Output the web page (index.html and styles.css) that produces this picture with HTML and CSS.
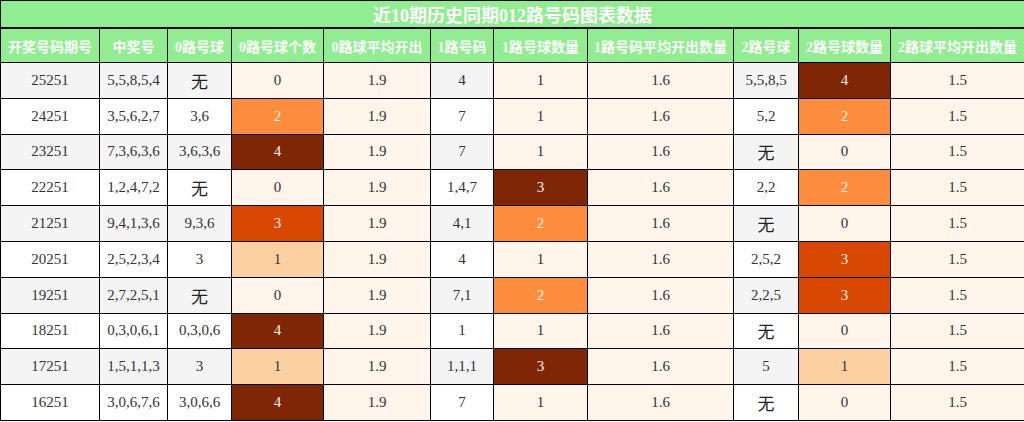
FILE: index.html
```html
<!DOCTYPE html>
<html lang="zh">
<head>
<meta charset="utf-8">
<title>近10期历史同期012路号码图表数据</title>
<link rel="stylesheet" href="styles.css">
</head>
<body>
<table class="chart">
<colgroup>
<col class="c1"><col class="c2"><col class="c3"><col class="c4"><col class="c5"><col class="c6"><col class="c7"><col class="c8"><col class="c9"><col class="c10"><col class="c11">
</colgroup>
<thead>
<tr class="title-row"><th colspan="11">近10期历史同期012路号码图表数据</th></tr>
<tr class="head-row">
<th>开奖号码期号</th><th>中奖号</th><th>0路号球</th><th>0路号球个数</th><th>0路球平均开出</th><th>1路号码</th><th>1路号球数量</th><th>1路号码平均开出数量</th><th>2路号球</th><th>2路号球数量</th><th>2路球平均开出数量</th>
</tr>
</thead>
<tbody>
<tr class="odd"><td class="g">25251</td><td class="g">5,5,8,5,4</td><td class="g none">无</td><td class="h0">0</td><td class="h0">1.9</td><td class="g">4</td><td class="h0">1</td><td class="h0">1.6</td><td class="g">5,5,8,5</td><td class="h4">4</td><td class="h0">1.5</td></tr>
<tr><td class="g">24251</td><td class="g">3,5,6,2,7</td><td class="g">3,6</td><td class="h2">2</td><td class="h0">1.9</td><td class="g">7</td><td class="h0">1</td><td class="h0">1.6</td><td class="g">5,2</td><td class="h2">2</td><td class="h0">1.5</td></tr>
<tr class="odd"><td class="g">23251</td><td class="g">7,3,6,3,6</td><td class="g">3,6,3,6</td><td class="h4">4</td><td class="h0">1.9</td><td class="g">7</td><td class="h0">1</td><td class="h0">1.6</td><td class="g none">无</td><td class="h0">0</td><td class="h0">1.5</td></tr>
<tr><td class="g">22251</td><td class="g">1,2,4,7,2</td><td class="g none">无</td><td class="h0">0</td><td class="h0">1.9</td><td class="g">1,4,7</td><td class="h4">3</td><td class="h0">1.6</td><td class="g">2,2</td><td class="h2">2</td><td class="h0">1.5</td></tr>
<tr class="odd"><td class="g">21251</td><td class="g">9,4,1,3,6</td><td class="g">9,3,6</td><td class="h3">3</td><td class="h0">1.9</td><td class="g">4,1</td><td class="h2">2</td><td class="h0">1.6</td><td class="g none">无</td><td class="h0">0</td><td class="h0">1.5</td></tr>
<tr><td class="g">20251</td><td class="g">2,5,2,3,4</td><td class="g">3</td><td class="h1">1</td><td class="h0">1.9</td><td class="g">4</td><td class="h0">1</td><td class="h0">1.6</td><td class="g">2,5,2</td><td class="h3">3</td><td class="h0">1.5</td></tr>
<tr class="odd"><td class="g">19251</td><td class="g">2,7,2,5,1</td><td class="g none">无</td><td class="h0">0</td><td class="h0">1.9</td><td class="g">7,1</td><td class="h2">2</td><td class="h0">1.6</td><td class="g">2,2,5</td><td class="h3">3</td><td class="h0">1.5</td></tr>
<tr><td class="g">18251</td><td class="g">0,3,0,6,1</td><td class="g">0,3,0,6</td><td class="h4">4</td><td class="h0">1.9</td><td class="g">1</td><td class="h0">1</td><td class="h0">1.6</td><td class="g none">无</td><td class="h0">0</td><td class="h0">1.5</td></tr>
<tr class="odd"><td class="g">17251</td><td class="g">1,5,1,1,3</td><td class="g">3</td><td class="h1">1</td><td class="h0">1.9</td><td class="g">1,1,1</td><td class="h4">3</td><td class="h0">1.6</td><td class="g">5</td><td class="h1">1</td><td class="h0">1.5</td></tr>
<tr><td class="g">16251</td><td class="g">3,0,6,7,6</td><td class="g">3,0,6,6</td><td class="h4">4</td><td class="h0">1.9</td><td class="g">7</td><td class="h0">1</td><td class="h0">1.6</td><td class="g none">无</td><td class="h0">0</td><td class="h0">1.5</td></tr>
</tbody>
</table>
</body>
</html>
```
FILE: styles.css
```css
html, body {
  margin: 0;
  padding: 0;
  background: #ffffff;
}
.chart {
  width: 1024px;
  border-collapse: collapse;
  table-layout: fixed;
  font-family: "Liberation Serif", "Noto Sans CJK SC", serif;
  font-size: 15px;
  color: #333333;
}
.c1 { width: 99px; }
.c2 { width: 68px; }
.c3 { width: 64px; }
.c4 { width: 92px; }
.c5 { width: 107px; }
.c6 { width: 63px; }
.c7 { width: 94px; }
.c8 { width: 146px; }
.c9 { width: 65px; }
.c10 { width: 92px; }
.c11 { width: 134px; }
.chart th, .chart td {
  border: 1px solid #000000;
  text-align: center;
  padding: 0;
  overflow: hidden;
  white-space: nowrap;
}
.title-row th {
  background: #90ee90;
  color: #ffffff;
  font-size: 18px;
  font-weight: bold;
  height: 26px;
  border-bottom-width: 2px;
}
.head-row th {
  background: #90ee90;
  color: #ffffff;
  font-size: 14px;
  font-weight: bold;
  height: 33px;
}
.chart td {
  height: 34.8px;
  background: #fff5eb;
}
.chart td.g { background: #ffffff; }
.chart tr.odd td.g { background: #f4f4f4; }
.none {
  font-family: "Noto Sans CJK SC", sans-serif;
  font-size: 17px;
  color: #222222;
}
.chart td.h0 { background: #fff5eb; }
.chart td.h1 { background: #fdd0a2; }
.chart td.h2 { background: #fd8d3c; color: #f4f4f4; }
.chart td.h3 { background: #d94801; color: #f4f4f4; }
.chart td.h4 { background: #7f2704; color: #f4f4f4; }
```
